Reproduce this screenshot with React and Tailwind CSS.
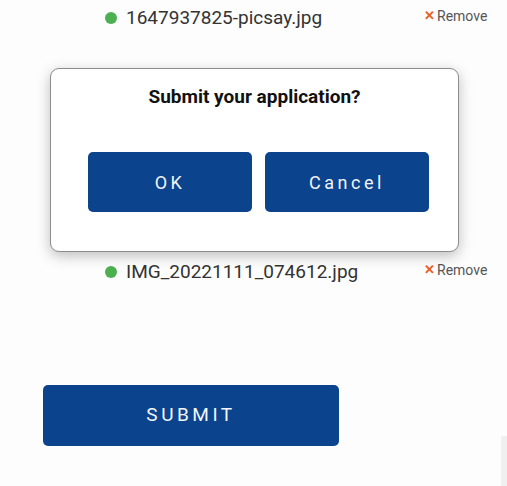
import React from "react";

const font = { fontFamily: "Roboto, 'Noto Sans', sans-serif" };

function FileRow({ name }) {
  return (
    <div className="flex items-center h-[24px]">
      <div className="flex items-center pl-[105px] w-[420px]">
        <span className="w-[12px] h-[12px] rounded-full bg-[#4caf50] mr-[9px]" />
        <span className="text-[19px] text-[#333] leading-[24px]">{name}</span>
      </div>
      <div className="flex items-center ml-[4px] -mt-[4px] text-[14px] text-[#555] leading-[20px]">
        <span className="text-[#e8601c] font-bold text-[13px] mr-[2px]">✕</span>
        <span>Remove</span>
      </div>
    </div>
  );
}

export default function App() {
  return (
    <div className="relative w-[507px] h-[486px] bg-[#fdfdfd] overflow-hidden" style={font}>
      <div className="flex flex-col pt-[6px]">
        <FileRow name="1647937825-picsay.jpg" />
        <div className="h-[230px]" />
        <FileRow name="IMG_20221111_074612.jpg" />
        <div className="h-[101px]" />
        <div className="pl-[43px]">
          <button className="w-[296px] h-[61px] rounded-[5px] bg-[#0b438d] text-[#f4f6fa] text-[19px] tracking-[3.5px] font-normal">
            SUBMIT
          </button>
        </div>
      </div>
      <div className="absolute right-0 top-[436px] w-[6px] h-[50px] bg-[#f0f0f0]" />

      <div className="absolute left-[50px] top-[68px] w-[409px] h-[184px] bg-white rounded-[9px] border border-[#8c8c8c] shadow-[0_4px_14px_rgba(0,0,0,0.25)] flex flex-col">
        <div className="mt-[16px] text-[19px] font-bold text-[#111] leading-[24px] text-center">
          Submit your application?
        </div>
        <div className="flex gap-[13px] mt-[43px] pl-[37px]">
          <button className="w-[164px] h-[60px] rounded-[5px] bg-[#0b438d] text-[#f2f4f8] text-[18px] tracking-[3.5px]">
            OK
          </button>
          <button className="w-[164px] h-[60px] rounded-[5px] bg-[#0b438d] text-[#f2f4f8] text-[18px] tracking-[3.5px]">
            Cancel
          </button>
        </div>
      </div>
    </div>
  );
}
